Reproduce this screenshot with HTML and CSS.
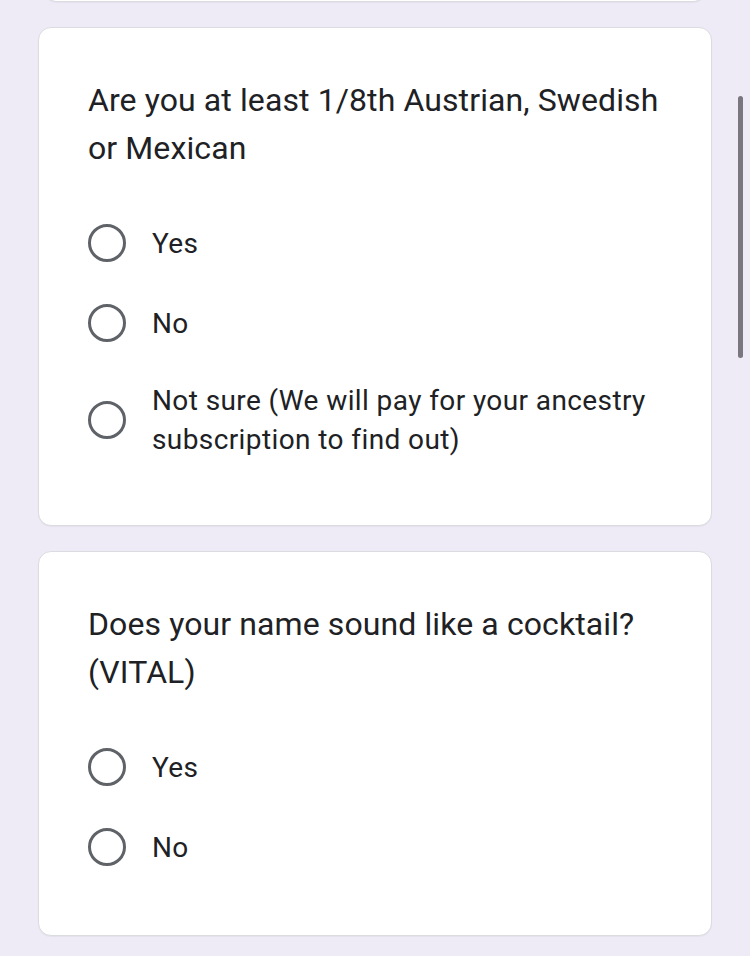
FILE: index.html
```html
<!DOCTYPE html>
<html>
<head>
<meta charset="utf-8">
<link rel="stylesheet" href="styles.css">
</head>
<body>
<div class="page">
  <div class="card card-prev"></div>
  <div class="card">
    <div class="title">Are you at least 1/8th Austrian, Swedish or Mexican</div>
    <div class="options">
      <div class="option"><span class="radio"></span><span class="label">Yes</span></div>
      <div class="option"><span class="radio"></span><span class="label">No</span></div>
      <div class="option"><span class="radio"></span><span class="label">Not sure (We will pay for your ancestry subscription to find out)</span></div>
    </div>
  </div>
  <div class="card">
    <div class="title">Does your name sound like a cocktail? (VITAL)</div>
    <div class="options">
      <div class="option"><span class="radio"></span><span class="label">Yes</span></div>
      <div class="option"><span class="radio"></span><span class="label">No</span></div>
    </div>
  </div>
</div>
<div class="scrollbar"></div>
</body>
</html>
```
FILE: styles.css
```css
html, body {
  margin: 0;
  padding: 0;
  background: #efebf6;
  height: 100%;
  overflow: hidden;
}
.page {
  display: flex;
  flex-direction: column;
  gap: 25px;
  padding: 0 38px 0 38px;
  font-family: Roboto, "Noto Sans", sans-serif;
  color: #202124;
}
.card {
  background: #fff;
  border: 1px solid #dadce0;
  border-radius: 13px;
  padding: 48px 49px 48px 49px;
  box-shadow: 0 1px 1px rgba(0,0,0,0.04);
}
.card-prev {
  height: 20px;
  padding: 0;
  margin-top: -19px;
  margin-left: 6px;
  margin-right: 6px;
  border-top: none;
  border-radius: 0 0 13px 13px;
}
.title {
  font-size: 32px;
  line-height: 48px;
  letter-spacing: 0.1px;
}
.options {
  margin-top: 31px;
  display: flex;
  flex-direction: column;
}
.option {
  display: flex;
  align-items: center;
  padding: 18px 0;
}
.radio {
  flex: none;
  box-sizing: border-box;
  width: 38px;
  height: 38px;
  border: 3.5px solid #5f6368;
  border-radius: 50%;
  margin: 3px 26px 3px 0;
}
.label {
  font-size: 28px;
  line-height: 39px;
  letter-spacing: 0.4px;
}
.scrollbar {
  position: fixed;
  left: 738px;
  top: 96px;
  width: 5px;
  height: 262px;
  border-radius: 3px;
  background: #7a7680;
}
```
